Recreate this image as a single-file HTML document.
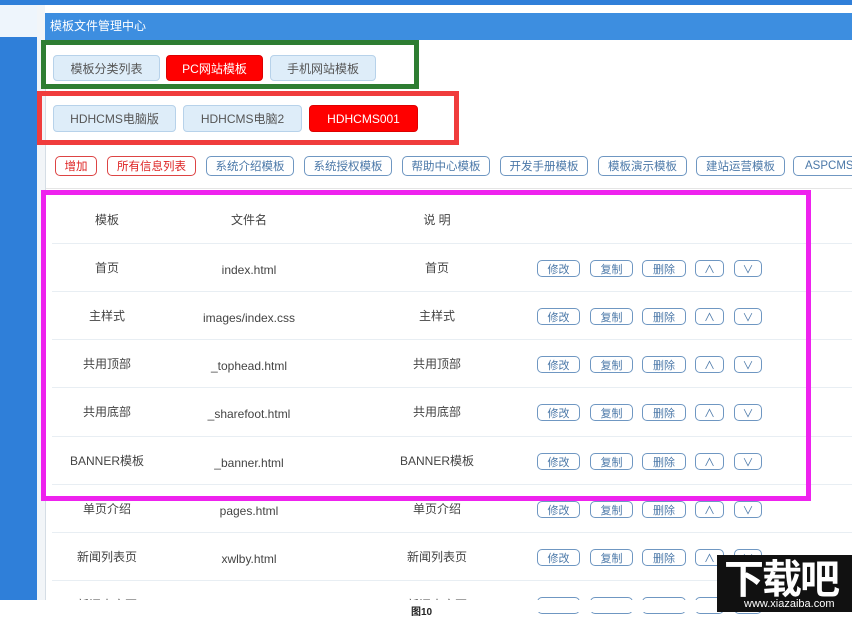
<!DOCTYPE html>
<html><head><meta charset="utf-8"><style>
*{margin:0;padding:0;box-sizing:border-box}
body{width:852px;height:612px;overflow:hidden;background:#fff;position:relative;font-family:"Liberation Sans","Noto Sans CJK SC",sans-serif;font-size:12px;color:#333}
.a{position:absolute}
.b{position:absolute;display:flex;align-items:center;justify-content:center;border-radius:4px;white-space:nowrap}
.t1{background:#deedf9;border:1px solid #b7d2ea;color:#555;font-size:12px}
.r1{background:#f00;color:#fff;border:1px solid #d00;font-size:12px}
.o{border:1px solid #6f97c2;color:#4b78a8;background:#fff;font-size:11.5px;border-radius:5px}
.or{border:1px solid #d44;color:#d22;background:#fff;font-size:11.5px;border-radius:5px}
.c{position:absolute;transform:translateX(-50%);white-space:nowrap;font-size:12px;color:#444;line-height:16px}
.l{margin-top:2px}
.sb{position:absolute;display:flex;align-items:center;justify-content:center;border:1px solid #6f97c2;color:#4b78a8;border-radius:5px;font-size:11px;height:17px}
.line{position:absolute;left:52px;width:800px;height:1px;background:#e8eef3}
</style></head><body>
<div class="a" style="left:0;top:0;width:852px;height:5px;background:#2f7fd9"></div>
<div class="a" style="left:0;top:5px;width:37px;height:32px;background:#eef5fc"></div>
<div class="a" style="left:0;top:37px;width:37px;height:563px;background:#2f7fd9"></div>
<div class="a" style="left:37px;top:5px;width:8px;height:595px;background:#f2f5f8"></div>
<div class="a" style="left:45px;top:13px;width:807px;height:27px;background:#3d8ee0;color:#fff;font-size:12px;line-height:27px;padding-left:5px">模板文件管理中心</div>
<div class="a" style="left:45px;top:40px;width:1px;height:560px;background:#d5dde5"></div>

<div class="a" style="left:41px;top:40px;width:378px;height:49px;border:5px solid #2e7d32"></div>
<div class="b t1" style="left:53px;top:55px;width:107px;height:26px">模板分类列表</div>
<div class="b r1" style="left:166px;top:55px;width:97px;height:26px">PC网站模板</div>
<div class="b t1" style="left:270px;top:55px;width:106px;height:26px">手机网站模板</div>

<div class="a" style="left:37px;top:91px;width:422px;height:54px;border:5px solid #f03c3c"></div>
<div class="b t1" style="left:53px;top:105px;width:123px;height:27px">HDHCMS电脑版</div>
<div class="b t1" style="left:183px;top:105px;width:119px;height:27px">HDHCMS电脑2</div>
<div class="b r1" style="left:309px;top:105px;width:109px;height:27px">HDHCMS001</div>

<div class="b or" style="left:55px;top:156px;width:42px;height:20px">增加</div>
<div class="b or" style="left:107px;top:156px;width:89px;height:20px">所有信息列表</div>
<div class="b o" style="left:206px;top:156px;width:88px;height:20px">系统介绍模板</div>
<div class="b o" style="left:304px;top:156px;width:88px;height:20px">系统授权模板</div>
<div class="b o" style="left:402px;top:156px;width:88px;height:20px">帮助中心模板</div>
<div class="b o" style="left:500px;top:156px;width:88px;height:20px">开发手册模板</div>
<div class="b o" style="left:598px;top:156px;width:89px;height:20px">模板演示模板</div>
<div class="b o" style="left:696px;top:156px;width:89px;height:20px">建站运营模板</div>
<div class="b o" style="left:793px;top:156px;width:70px;height:20px;justify-content:flex-start;padding-left:11px">ASPCMS</div>
<div class="a" style="left:46px;top:188px;width:806px;height:1px;background:#e5e5e5"></div>

<div class="line" style="top:243px"></div>
<div class="line" style="top:291px"></div>
<div class="line" style="top:339px"></div>
<div class="line" style="top:387px"></div>
<div class="line" style="top:436px"></div>
<div class="line" style="top:484px"></div>
<div class="line" style="top:532px"></div>
<div class="line" style="top:580px"></div>

<div class="c" style="left:107px;top:212px">模板</div>
<div class="c" style="left:249px;top:212px">文件名</div>
<div class="c" style="left:437px;top:212px">说 明</div>

<div class="c" style="left:107px;top:260px">首页</div><div class="c l" style="left:249px;top:260px">index.html</div><div class="c" style="left:437px;top:260px">首页</div>
<div class="c" style="left:107px;top:308px">主样式</div><div class="c l" style="left:249px;top:308px">images/index.css</div><div class="c" style="left:437px;top:308px">主样式</div>
<div class="c" style="left:107px;top:356px">共用顶部</div><div class="c l" style="left:249px;top:356px">_tophead.html</div><div class="c" style="left:437px;top:356px">共用顶部</div>
<div class="c" style="left:107px;top:404px">共用底部</div><div class="c l" style="left:249px;top:404px">_sharefoot.html</div><div class="c" style="left:437px;top:404px">共用底部</div>
<div class="c" style="left:107px;top:453px">BANNER模板</div><div class="c l" style="left:249px;top:453px">_banner.html</div><div class="c" style="left:437px;top:453px">BANNER模板</div>
<div class="c" style="left:107px;top:501px">单页介绍</div><div class="c l" style="left:249px;top:501px">pages.html</div><div class="c" style="left:437px;top:501px">单页介绍</div>
<div class="c" style="left:107px;top:549px">新闻列表页</div><div class="c l" style="left:249px;top:549px">xwlby.html</div><div class="c" style="left:437px;top:549px">新闻列表页</div>
<div class="c" style="left:107px;top:597px">新闻内容页</div><div class="c l" style="left:249px;top:597px">xwnr.html</div><div class="c" style="left:437px;top:597px">新闻内容页</div>

<div class="sb" style="left:537px;top:260px;width:43px">修改</div><div class="sb" style="left:590px;top:260px;width:43px">复制</div><div class="sb" style="left:642px;top:260px;width:44px">删除</div><div class="sb" style="left:695px;top:260px;width:29px">∧</div><div class="sb" style="left:734px;top:260px;width:28px">∨</div>
<div class="sb" style="left:537px;top:308px;width:43px">修改</div><div class="sb" style="left:590px;top:308px;width:43px">复制</div><div class="sb" style="left:642px;top:308px;width:44px">删除</div><div class="sb" style="left:695px;top:308px;width:29px">∧</div><div class="sb" style="left:734px;top:308px;width:28px">∨</div>
<div class="sb" style="left:537px;top:356px;width:43px">修改</div><div class="sb" style="left:590px;top:356px;width:43px">复制</div><div class="sb" style="left:642px;top:356px;width:44px">删除</div><div class="sb" style="left:695px;top:356px;width:29px">∧</div><div class="sb" style="left:734px;top:356px;width:28px">∨</div>
<div class="sb" style="left:537px;top:404px;width:43px">修改</div><div class="sb" style="left:590px;top:404px;width:43px">复制</div><div class="sb" style="left:642px;top:404px;width:44px">删除</div><div class="sb" style="left:695px;top:404px;width:29px">∧</div><div class="sb" style="left:734px;top:404px;width:28px">∨</div>
<div class="sb" style="left:537px;top:453px;width:43px">修改</div><div class="sb" style="left:590px;top:453px;width:43px">复制</div><div class="sb" style="left:642px;top:453px;width:44px">删除</div><div class="sb" style="left:695px;top:453px;width:29px">∧</div><div class="sb" style="left:734px;top:453px;width:28px">∨</div>
<div class="sb" style="left:537px;top:501px;width:43px">修改</div><div class="sb" style="left:590px;top:501px;width:43px">复制</div><div class="sb" style="left:642px;top:501px;width:44px">删除</div><div class="sb" style="left:695px;top:501px;width:29px">∧</div><div class="sb" style="left:734px;top:501px;width:28px">∨</div>
<div class="sb" style="left:537px;top:549px;width:43px">修改</div><div class="sb" style="left:590px;top:549px;width:43px">复制</div><div class="sb" style="left:642px;top:549px;width:44px">删除</div><div class="sb" style="left:695px;top:549px;width:29px">∧</div><div class="sb" style="left:734px;top:549px;width:28px">∨</div>
<div class="sb" style="left:537px;top:597px;width:43px">修改</div><div class="sb" style="left:590px;top:597px;width:43px">复制</div><div class="sb" style="left:642px;top:597px;width:44px">删除</div><div class="sb" style="left:695px;top:597px;width:29px">∧</div><div class="sb" style="left:734px;top:597px;width:28px">∨</div>

<div class="a" style="left:41px;top:190px;width:770px;height:311px;border:5px solid #ee22ee"></div>

<div class="a" style="left:0;top:600px;width:852px;height:12px;background:#fff"></div>
<div class="a" style="left:411px;top:603px;font-size:10px;font-weight:bold;color:#222">图10</div>

<div class="a" style="left:717px;top:555px;width:135px;height:57px;background:#111"></div>
<div class="a" style="left:724px;top:552px;color:#fff;font-size:40px;font-weight:bold;letter-spacing:-2px;font-family:'Noto Sans CJK SC',sans-serif;line-height:48px">下载吧</div>
<div class="a" style="left:744px;top:598px;color:#fff;font-size:11px;line-height:13px">www.xiazaiba.com</div>
</body></html>
